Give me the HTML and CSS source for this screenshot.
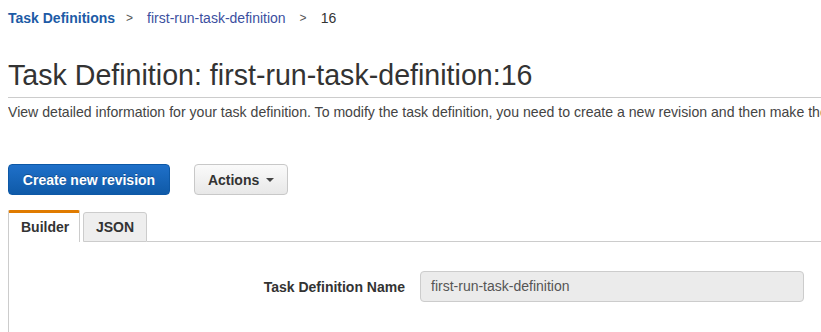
FILE: index.html
```html
<!DOCTYPE html>
<html>
<head>
<meta charset="utf-8">
<link rel="stylesheet" href="styles.css">
</head>
<body>
<div class="page">
  <nav class="crumbs">
    <a class="crumb crumb-root" href="#">Task Definitions</a>
    <span class="sep">&gt;</span>
    <a class="crumb crumb-link" href="#">first-run-task-definition</a>
    <span class="sep sep-last">&gt;</span>
    <span class="crumb-current">16</span>
  </nav>
  <h1 class="title">Task Definition: first-run-task-definition:16</h1>
  <p class="desc">View detailed information for your task definition. To modify the task definition, you need to create a new revision and then make the required changes to the task definition</p>
  <div class="actions">
    <button class="btn btn-primary">Create new revision</button>
    <button class="btn btn-default">Actions <span class="caret"></span></button>
  </div>
  <div class="tabs">
    <div class="tab tab-active">Builder</div>
    <div class="tab">JSON</div>
    <div class="tab-fill"></div>
  </div>
  <div class="panel">
    <div class="form-row">
      <label class="form-label">Task Definition Name</label>
      <div class="form-input">first-run-task-definition</div>
    </div>
  </div>
</div>
</body>
</html>
```

FILE: styles.css
```css
* { box-sizing: border-box; }
html, body { margin: 0; padding: 0; background: #fff; overflow: hidden; }
body { font-family: "Liberation Sans", Arial, sans-serif; color: #333; }
.page { padding: 0 0 0 8px; width: 821px; }

.crumbs { display: flex; align-items: center; height: 36px; font-size: 14px; white-space: nowrap; }
.crumb { text-decoration: none; }
.crumb-root { color: #1d5ba6; font-weight: bold; }
.crumb-link { color: #3b4fa0; }
.sep { color: #555; margin: 0 14px 0 11px; font-size: 12px; }
.sep-last { margin: 0 14px 0 14px; }
.crumb-current { color: #333; }

.title { margin: 22px 0 0 0; font-size: 28.6px; font-weight: normal; color: #333; line-height: 34px; padding-bottom: 5px; border-bottom: 1px solid #ccc; white-space: nowrap; }
.desc { margin: 5px 0 0 0; font-size: 14.1px; color: #444; white-space: nowrap; overflow: hidden; line-height: 18px; }

.actions { display: flex; gap: 24px; margin-top: 43px; }
.btn { font-family: inherit; font-size: 14px; font-weight: bold; height: 31px; border-radius: 4px; padding: 0 10px; cursor: pointer; }
.btn-primary { width: 162px; color: #fff; background: linear-gradient(#1f70c9, #0f5aa8); border: 1px solid #0d58a6; text-shadow: 0 -1px 0 rgba(0,0,0,0.25); }
.btn-default { width: 94px; color: #333; background: linear-gradient(#fafafa, #e8e8e8); border: 1px solid #c8c8c8; }
.caret { display: inline-block; width: 0; height: 0; border-left: 4px solid transparent; border-right: 4px solid transparent; border-top: 4px solid #444; vertical-align: middle; margin-left: 3px; margin-top: -2px; }

.tabs { display: flex; align-items: flex-end; margin-top: 15px; height: 32px; }
.tab { font-size: 14px; font-weight: bold; color: #333; height: 30px; line-height: 29px; padding: 0 12px; border: 1px solid #ccc; border-radius: 3px 3px 0 0; background: #eee; margin-left: 3px; width: 64px; text-align: center; }
.tab-active { height: 32px; width: 72px; margin-left: 0; background: #fff; border-top: 3px solid #e07b00; border-bottom: none; border-radius: 2px 2px 0 0; line-height: 29px; }
.tab-fill { flex: 1; border-bottom: 1px solid #ccc; height: 1px; }

.panel { border-left: 1px solid #ccc; height: 100px; }
.form-row { display: flex; align-items: center; padding-top: 29px; }
.form-label { width: 411px; text-align: right; font-size: 14px; font-weight: bold; color: #333; padding-right: 15px; }
.form-input { width: 384px; height: 31px; border: 1px solid #ccc; border-radius: 4px; background: #ebebeb; font-size: 14px; color: #555; padding: 0 10px; line-height: 29px; }
```
